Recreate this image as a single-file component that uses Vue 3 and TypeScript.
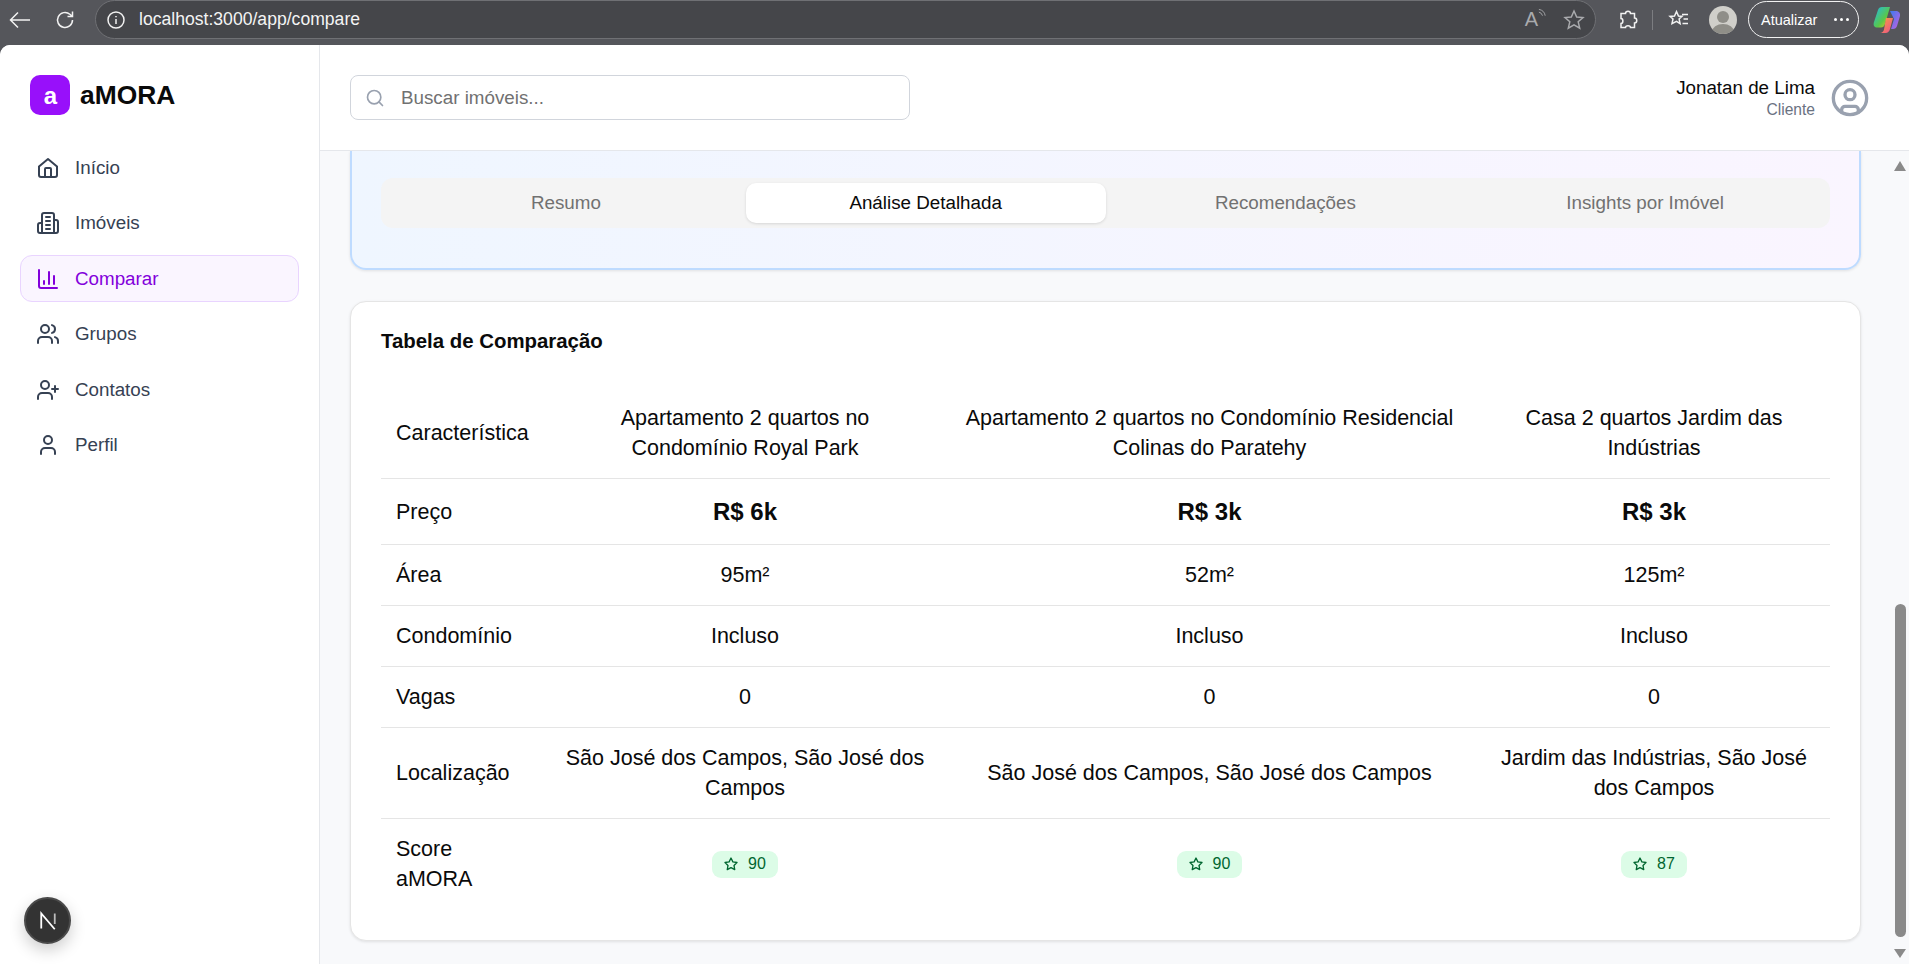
<script setup lang="ts">
interface NavItem {
  label: string;
  icon: string;
  active?: boolean;
}

interface Row {
  label: string;
  values: string[];
  kind?: 'price' | 'score';
}

const navItems: NavItem[] = [
  { label: 'Início', icon: 'home' },
  { label: 'Imóveis', icon: 'building' },
  { label: 'Comparar', icon: 'chart', active: true },
  { label: 'Grupos', icon: 'users' },
  { label: 'Contatos', icon: 'userplus' },
  { label: 'Perfil', icon: 'user' },
];

const tabs = ['Resumo', 'Análise Detalhada', 'Recomendações', 'Insights por Imóvel'];

const headers = [
  'Apartamento 2 quartos no Condomínio Royal Park',
  'Apartamento 2 quartos no Condomínio Residencial Colinas do Paratehy',
  'Casa 2 quartos Jardim das Indústrias',
];

const rows: Row[] = [
  { label: 'Preço', values: ['R$ 6k', 'R$ 3k', 'R$ 3k'], kind: 'price' },
  { label: 'Área', values: ['95m²', '52m²', '125m²'] },
  { label: 'Condomínio', values: ['Incluso', 'Incluso', 'Incluso'] },
  { label: 'Vagas', values: ['0', '0', '0'] },
  {
    label: 'Localização',
    values: [
      'São José dos Campos, São José dos Campos',
      'São José dos Campos, São José dos Campos',
      'Jardim das Indústrias, São José dos Campos',
    ],
  },
  { label: 'Score aMORA', values: ['90', '90', '87'], kind: 'score' },
];
</script>

<template>
  <div class="window">
    <header class="browser">
      <svg class="b-ico" viewBox="0 0 24 24" width="24" height="24"><path d="M22 12H2M10 4.500 2.500 12l7.500 7.500" /></svg>
      <svg class="b-ico reload" viewBox="0 0 24 24" width="24" height="24"><path d="M19.500 12a7.500 7.500 0 1 1-2.600-5.700L19.500 8.500M19.500 3.500v5h-5" /></svg>
      <div class="urlbar">
        <svg class="b-ico" viewBox="0 0 20 20" width="20" height="20"><circle cx="10" cy="10" r="8" /><path d="M10 9v5M10 6v1.200" /></svg>
        <span class="url">localhost:3000/app/compare</span>
        <span class="read">A<svg viewBox="0 0 10 10" width="9" height="10"><path d="M1 1q6 1 7 7M1 4q3 .5 4 4" /></svg></span>
        <svg class="b-ico dim" viewBox="0 0 24 24" width="24" height="24"><path d="m12 3 2.700 6 6.300.6-4.800 4.200 1.500 6.400-5.700-3.400-5.700 3.400 1.500-6.400L3 9.600 9.300 9z" /></svg>
      </div>
      <svg class="b-ico puzzle" viewBox="0 0 24 24" width="24" height="24"><path d="M9.500 5.500c0-3 5-3 5 0h4v4.500c3 0 3 5 0 5v4.500h-4c0-2.500-5-2.500-5 0H5v-4c2.500 0 2.500-5 0-5V5.500z" /></svg>
      <span class="sep"></span>
      <svg class="b-ico" viewBox="0 0 24 24" width="24" height="24"><path d="m9.500 3.500 2 4.500 3.500.4-2.900 2.600 1 4.700-3.600-2.400L5 15.700l1-4.700-3-2.600 4.500-.4zM15 6.500h6M16.500 11h4.500M15.500 15.500h5.500" /></svg>
      <span class="avatar"><i></i><b></b></span>
      <div class="update">
        <span>Atualizar</span>
        <span class="dots"><i></i><i></i><i></i></span>
      </div>
      <svg class="copilot" viewBox="0 0 28 28" width="28" height="28">
        <defs>
          <linearGradient id="cpa" x1="0" y1="0" x2="1" y2="1"><stop offset="0" stop-color="#22b8e8" /><stop offset=".6" stop-color="#58c84a" /><stop offset="1" stop-color="#f2c320" /></linearGradient>
          <linearGradient id="cpb" x1="0" y1="0" x2="1" y2="1"><stop offset="0" stop-color="#3a7bf0" /><stop offset="1" stop-color="#c65fe0" /></linearGradient>
          <linearGradient id="cpc" x1="0" y1="0" x2="1" y2="1"><stop offset="0" stop-color="#f7a33a" /><stop offset="1" stop-color="#ee4d8e" /></linearGradient>
        </defs>
        <path d="M9 1h8l-5 17c-.8 2.500-2 3.500-4 3.500H4C1 21.500 0 19 1 16L5 4c.6-2 2-3 4-3z" fill="url(#cpa)" />
        <path d="M17 5h6c3 0 4.500 2.500 4 5l-3 10c-.6 2-2 3-4 3h-2l3-10z" fill="url(#cpb)" />
        <path d="M13 12h7l-3 11c-.5 2-2 4-4.500 4H7c2 0 3.500-1.500 4-3.500z" fill="url(#cpc)" />
      </svg>
    </header>

    <div class="app">
      <aside class="sidebar">
        <div class="brand">
          <span class="logo">a</span>
          <span class="brand-name">aMORA</span>
        </div>
        <nav class="nav">
          <a v-for="item in navItems" :key="item.label" class="nav-item" :class="{ active: item.active }">
            <svg class="nav-ico" viewBox="0 0 24 24" width="24" height="24">
              <template v-if="item.icon === 'home'">
                <path d="M3 10.500 12 3l9 7.500V19a2 2 0 0 1-2 2H5a2 2 0 0 1-2-2z" />
                <path d="M9 21v-8a1 1 0 0 1 1-1h4a1 1 0 0 1 1 1v8" />
              </template>
              <template v-else-if="item.icon === 'building'">
                <path d="M6 22V4a2 2 0 0 1 2-2h8a2 2 0 0 1 2 2v18z" />
                <path d="M6 12H4a2 2 0 0 0-2 2v6a2 2 0 0 0 2 2h2M18 9h2a2 2 0 0 1 2 2v9a2 2 0 0 1-2 2h-2" />
                <path d="M10 6h4M10 10h4M10 14h4M10 18h4" />
              </template>
              <template v-else-if="item.icon === 'chart'">
                <path d="M3 3v16a2 2 0 0 0 2 2h16" />
                <path d="M8 17v-3M13 17V5M18 17V9" />
              </template>
              <template v-else-if="item.icon === 'users'">
                <path d="M16 21v-2a4 4 0 0 0-4-4H6a4 4 0 0 0-4 4v2" />
                <circle cx="9" cy="7" r="4" />
                <path d="M22 21v-2a4 4 0 0 0-3-3.870M16 3.130a4 4 0 0 1 0 7.750" />
              </template>
              <template v-else-if="item.icon === 'userplus'">
                <path d="M16 21v-2a4 4 0 0 0-4-4H6a4 4 0 0 0-4 4v2" />
                <circle cx="9" cy="7" r="4" />
                <path d="M19 8v6M22 11h-6" />
              </template>
              <template v-else>
                <path d="M19 21v-2a4 4 0 0 0-4-4H9a4 4 0 0 0-4 4v2" />
                <circle cx="12" cy="7" r="4" />
              </template>
            </svg>
            <span>{{ item.label }}</span>
          </a>
        </nav>
        <button class="next-badge" type="button">
          <svg viewBox="0 0 20 20" width="30" height="30">
            <path d="M5.500 15V5l9 10.500" />
            <path class="fade" d="M14.500 5v7" />
          </svg>
        </button>
      </aside>

      <div class="main">
        <div class="topbar">
          <div class="search">
            <svg viewBox="0 0 24 24" width="20" height="20"><circle cx="11" cy="11" r="8" /><path d="m21 21-4.300-4.300" /></svg>
            <span>Buscar imóveis...</span>
          </div>
          <div class="account">
            <div class="who">
              <div class="who-name">Jonatan de Lima</div>
              <div class="who-role">Cliente</div>
            </div>
            <svg viewBox="0 0 24 24" width="40" height="40"><circle cx="12" cy="12" r="10" /><circle cx="12" cy="10" r="3" /><path d="M7 20.700V19a2 2 0 0 1 2-2h6a2 2 0 0 1 2 2v1.700" /></svg>
          </div>
        </div>

        <div class="content">
          <div class="scroller">
            <section class="hero">
              <div class="tabs">
                <div v-for="(tab, i) in tabs" :key="tab" class="tab" :class="{ on: i === 1 }">{{ tab }}</div>
              </div>
            </section>

            <section class="card">
              <h2>Tabela de Comparação</h2>
              <table class="compare">
                <colgroup>
                  <col class="c1" />
                  <col class="c2" />
                  <col class="c3" />
                  <col class="c4" />
                </colgroup>
                <thead>
                  <tr>
                    <th>Característica</th>
                    <th v-for="h in headers" :key="h">{{ h }}</th>
                  </tr>
                </thead>
                <tbody>
                  <tr v-for="row in rows" :key="row.label" :class="row.kind ? `${row.kind}-row` : ''">
                    <td>{{ row.label }}</td>
                    <td v-for="(value, i) in row.values" :key="i">
                      <span v-if="row.kind === 'score'" class="score">
                        <svg viewBox="0 0 24 24" width="16" height="16"><path d="m12 3 2.800 5.800 6.200.9-4.500 4.400 1.100 6.300L12 17.400l-5.600 3 1.100-6.300L3 9.700l6.200-.9z" /></svg>
                        {{ value }}
                      </span>
                      <template v-else>{{ value }}</template>
                    </td>
                  </tr>
                </tbody>
              </table>
            </section>
          </div>

          <div class="scrollbar">
            <span class="arrow up"></span>
            <span class="thumb"></span>
            <span class="arrow down"></span>
          </div>
        </div>
      </div>
    </div>
  </div>
</template>

<style>
html, body {
  margin: 0;
  height: 100%;
  overflow: hidden;
}
</style>

<style scoped>
.window {
  width: 1909px;
  height: 964px;
  display: flex;
  flex-direction: column;
  background: #55565b;
  font-family: "Liberation Sans", Arial, sans-serif;
  overflow: hidden;
}

.browser {
  height: 45px;
  flex: none;
  display: flex;
  align-items: center;
  padding: 0 8px 6px;
  box-sizing: border-box;
  color: #fff;
}

.b-ico {
  fill: none;
  stroke: #f2f2f2;
  stroke-width: 1.5;
  flex: none;
}

.b-ico.reload {
  margin-left: 21px;
}

.b-ico.dim {
  stroke: #a9aaad;
}

.urlbar {
  width: 1501px;
  height: 39px;
  margin-left: 18px;
  padding: 0 9px 0 10px;
  box-sizing: border-box;
  border: 1px solid #6f7074;
  border-radius: 20px;
  background: #45464a;
  display: flex;
  align-items: center;
  flex: none;
}

.url {
  margin-left: 13px;
  font-size: 17.6px;
  color: #f4f4f4;
  flex: 1;
}

.read {
  font-size: 20px;
  color: #a9aaad;
  display: flex;
  align-items: flex-start;
  margin-right: 15px;
}

.read svg {
  fill: none;
  stroke: #a9aaad;
  stroke-width: 1;
}

.b-ico.puzzle {
  margin-left: 20px;
}

.sep {
  width: 1px;
  height: 20px;
  background: #7c7d81;
  margin: 0 14px 0 12px;
  flex: none;
}

.avatar {
  width: 28px;
  height: 28px;
  margin-left: 18px;
  border-radius: 50%;
  background: #d0cfca;
  position: relative;
  overflow: hidden;
  flex: none;
}

.avatar i {
  position: absolute;
  left: 8px;
  top: 5px;
  width: 12px;
  height: 12px;
  border-radius: 50%;
  background: #8f8e88;
}

.avatar b {
  position: absolute;
  left: 3px;
  top: 18px;
  width: 22px;
  height: 16px;
  border-radius: 50%;
  background: #8f8e88;
}

.update {
  width: 111px;
  height: 37px;
  margin-left: 11px;
  box-sizing: border-box;
  padding: 0 9px 0 12px;
  border: 1.5px solid #f2f2f2;
  border-radius: 19px;
  display: flex;
  align-items: center;
  justify-content: space-between;
  font-size: 14.5px;
  flex: none;
}

.dots {
  display: flex;
  gap: 3px;
}

.dots i {
  width: 3px;
  height: 3px;
  border-radius: 50%;
  background: #fff;
}

.copilot {
  margin-left: 14px;
  flex: none;
}

.app {
  flex: 1;
  min-height: 0;
  display: flex;
  background: #f8f9fb;
  border-radius: 10px 10px 0 0;
  overflow: hidden;
}

.sidebar {
  width: 320px;
  flex: none;
  box-sizing: border-box;
  background: #fff;
  border-right: 1px solid #e5e7eb;
  padding: 30px 20px 0;
  position: relative;
}

.brand {
  display: flex;
  align-items: center;
  gap: 10px;
  padding-left: 10px;
  height: 40px;
}

.logo {
  width: 40px;
  height: 40px;
  box-sizing: border-box;
  padding: 2px 0 0 1px;
  border-radius: 10px;
  background: #9810fa;
  color: #fff;
  font-size: 24px;
  font-weight: 700;
  display: flex;
  align-items: center;
  justify-content: center;
}

.brand-name {
  font-size: 26.4px;
  font-weight: 700;
  color: #0a0a0a;
}

.nav {
  margin-top: 29px;
  display: flex;
  flex-direction: column;
  gap: 8.6px;
}

.nav-item {
  height: 47px;
  box-sizing: border-box;
  border: 1px solid transparent;
  border-radius: 12px;
  display: flex;
  align-items: center;
  gap: 15.500px;
  padding-left: 14.500px;
  font-size: 18.8px;
  color: #364153;
}

.nav-item.active {
  background: #faf5ff;
  border-color: #e9d4ff;
  color: #8200db;
}

.nav-ico {
  fill: none;
  stroke: currentColor;
  stroke-width: 2;
  stroke-linecap: round;
  stroke-linejoin: round;
  flex: none;
}

.next-badge {
  position: absolute;
  left: 24px;
  bottom: 20px;
  width: 47px;
  height: 47px;
  padding: 0;
  border: 2px solid #4a4a4a;
  border-radius: 50%;
  background: #333;
  box-shadow: 0 6px 16px rgba(0, 0, 0, 0.2);
  display: flex;
  align-items: center;
  justify-content: center;
}

.next-badge svg {
  fill: none;
  stroke: #fff;
  stroke-width: 1.2;
}

.next-badge .fade {
  stroke: #bbb;
}

.main {
  flex: 1;
  min-width: 0;
  display: flex;
  flex-direction: column;
}

.topbar {
  height: 106px;
  flex: none;
  box-sizing: border-box;
  background: #fff;
  border-bottom: 1px solid #e5e7eb;
  padding: 0 39px 0 30px;
  display: flex;
  justify-content: space-between;
  align-items: flex-start;
}

.search {
  width: 560px;
  height: 45px;
  margin-top: 30px;
  box-sizing: border-box;
  border: 1px solid #d1d5dc;
  border-radius: 8px;
  padding-left: 14px;
  display: flex;
  align-items: center;
  gap: 16px;
  font-size: 18.8px;
  color: #717171;
}

.search svg {
  fill: none;
  stroke: #99a1af;
  stroke-width: 2;
  stroke-linecap: round;
  flex: none;
}

.account {
  display: flex;
  align-items: center;
  gap: 15px;
  margin-top: 30px;
}

.account svg {
  fill: none;
  stroke: #99a1af;
  stroke-width: 2;
  stroke-linecap: round;
  flex: none;
}

.who {
  text-align: right;
  padding-top: 1px;
}

.who-name {
  font-size: 18.8px;
  line-height: 24px;
  color: #0a0a0a;
}

.who-role {
  font-size: 15.6px;
  line-height: 20px;
  color: #6a7282;
}

.content {
  flex: 1;
  min-height: 0;
  display: flex;
  overflow: hidden;
}

.scroller {
  width: 1541px;
  flex: none;
  box-sizing: border-box;
  padding: 0 0 0 30px;
}

.hero {
  height: 119px;
  box-sizing: border-box;
  border: 2px solid #bedbff;
  border-top: none;
  border-radius: 0 0 16px 16px;
  background: linear-gradient(90deg, #eff6ff, #faf5ff);
  box-shadow: 0 1px 3px rgba(0, 0, 0, 0.1);
  padding: 27px 29px 0;
}

.tabs {
  height: 50px;
  box-sizing: border-box;
  padding: 5px;
  border-radius: 12px;
  background: #f4f4f4;
  display: grid;
  grid-template-columns: repeat(4, 1fr);
}

.tab {
  border-radius: 10px;
  display: flex;
  align-items: center;
  justify-content: center;
  font-size: 18.8px;
  color: #717171;
}

.tab.on {
  background: #fff;
  color: #0a0a0a;
  box-shadow: 0 1px 3px rgba(0, 0, 0, 0.12);
}

.card {
  margin-top: 31px;
  width: 1511px;
  height: 640px;
  box-sizing: border-box;
  background: #fff;
  border: 1px solid #e5e5e5;
  border-radius: 16px;
  box-shadow: 0 1px 3px rgba(0, 0, 0, 0.1);
  padding: 26px 30px 0;
}

.card h2 {
  margin: 0;
  font-size: 20.4px;
  line-height: 26px;
  font-weight: 700;
  color: #0a0a0a;
}

.compare {
  width: 1449px;
  margin-top: 34px;
  table-layout: fixed;
  border-collapse: collapse;
  font-size: 21.5px;
  line-height: 30px;
  color: #0a0a0a;
}

.c1 { width: 168px; }
.c2 { width: 392px; }
.c3 { width: 537px; }
.c4 { width: 352px; }

.compare th,
.compare td {
  padding: 15px;
  font-weight: 400;
  text-align: center;
  vertical-align: middle;
  border-bottom: 1px solid #e5e5e5;
}

.compare th:first-child {
  text-align: left;
  white-space: nowrap;
}

.compare td:first-child {
  text-align: left;
  padding-right: 24px;
}

.compare tbody tr:last-child td {
  border-bottom: none;
}

.price-row td:not(:first-child) {
  font-size: 24px;
  line-height: 35px;
  font-weight: 700;
}

.score {
  display: flex;
  align-items: center;
  gap: 9px;
  width: max-content;
  height: 27px;
  margin: 0 auto;
  padding: 0 12px 0 11px;
  border-radius: 9px;
  background: #dcfce7;
  color: #016630;
  font-size: 16px;
  line-height: 1;
}

.score svg {
  fill: none;
  stroke: currentColor;
  stroke-width: 2;
  stroke-linejoin: round;
}

.scrollbar {
  flex: 1;
  position: relative;
}

.arrow {
  position: absolute;
  left: 33px;
  width: 0;
  height: 0;
  border-left: 6.500px solid transparent;
  border-right: 6.500px solid transparent;
}

.arrow.up {
  top: 10px;
  border-bottom: 10px solid #8a8a8a;
}

.arrow.down {
  bottom: 6px;
  border-top: 9px solid #8a8a8a;
}

.thumb {
  position: absolute;
  left: 34px;
  top: 453px;
  width: 11px;
  height: 333px;
  border-radius: 6px;
  background: #8a8a8a;
}
</style>
